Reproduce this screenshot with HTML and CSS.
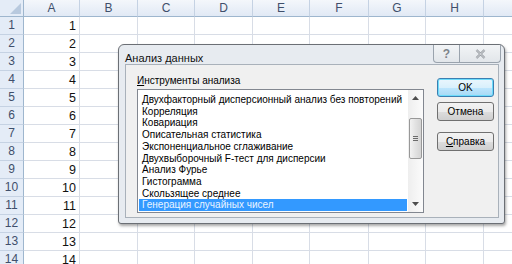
FILE: index.html
```html
<html>
<head>
    <meta charset="UTF-8">
    <title>Анализ данных</title>
    <link rel="stylesheet" href="styles.css">
</head>
<body>
    <div class="sheet">
        <div class="corner"><span class="corner-mark"></span></div>
        <div class="col-head">A</div>
        <div class="col-head">B</div>
        <div class="col-head">C</div>
        <div class="col-head">D</div>
        <div class="col-head">E</div>
        <div class="col-head">F</div>
        <div class="col-head">G</div>
        <div class="col-head">H</div>
        <div class="col-head"></div>
    </div>

    <div class="dialog">
        <div class="title-bar">
            <span class="title">Анализ данных</span>
            <div class="caption-buttons">
                <span class="cap-btn help">?</span>
                <span class="cap-btn close">
                    <svg width="11" height="10" viewBox="0 0 11 10">
                        <path d="M1.5 1 L9.5 9 M9.5 1 L1.5 9" stroke="#8a8f96" stroke-width="2.2" fill="none"/>
                        <path d="M1.5 1 L9.5 9 M9.5 1 L1.5 9" stroke="#f4f5f6" stroke-width="0.8" fill="none"/>
                    </svg>
                </span>
            </div>
        </div>
        <div class="client">
            <div class="tools">
                <div class="label"><u>И</u>нструменты анализа</div>
                <div class="listbox">
                    <ul class="items">
                        <li>Двухфакторный дисперсионный анализ без повторений</li>
                        <li>Корреляция</li>
                        <li>Ковариация</li>
                        <li>Описательная статистика</li>
                        <li>Экспоненциальное сглаживание</li>
                        <li>Двухвыборочный F-тест для дисперсии</li>
                        <li>Анализ Фурье</li>
                        <li>Гистограмма</li>
                        <li>Скользящее среднее</li>
                        <li class="selected">Генерация случайных чисел</li>
                    </ul>
                    <div class="scrollbar">
                        <span class="arrow up">
                            <svg width="7" height="4" viewBox="0 0 7 4"><path d="M0 4 L3.5 0 L7 4 Z" fill="#4d4d4d"/></svg>
                        </span>
                        <div class="track">
                            <div class="thumb"><span class="grip"></span></div>
                        </div>
                        <span class="arrow down">
                            <svg width="7" height="4" viewBox="0 0 7 4"><path d="M0 0 L3.5 4 L7 0 Z" fill="#4d4d4d"/></svg>
                        </span>
                    </div>
                </div>
            </div>
            <div class="buttons">
                <button class="btn default">OK</button>
                <button class="btn">Отмена</button>
                <button class="btn help-btn"><u>С</u>правка</button>
            </div>
        </div>
    </div>

    <script>
        const sheet = document.querySelector('.sheet');
        for (let r = 1; r <= 14; r++) {
            let row = '<div class="row-head">' + r + '</div><div class="cell num">' + r + '</div>';
            for (let c = 0; c < 8; c++) {
                row += '<div class="cell"></div>';
            }
            sheet.insertAdjacentHTML('beforeend', row);
        }
    </script>
</body>
</html>
```

FILE: styles.css
```css
body {
    margin: 0;
    width: 512px;
    height: 264px;
    overflow: hidden;
    position: relative;
    background: #ffffff;
    font-family: 'Liberation Sans', Arial, sans-serif;
}

/* spreadsheet */

.sheet {
    display: grid;
    grid-template-columns: 24px 56px 58px 57px 58px 57px 59px 57px 58px 40px;
    grid-template-rows: 17px;
    grid-auto-rows: 18px;
}

.corner {
    position: relative;
    background: #e4ecf7;
    border-right: 1px solid #9eb6ce;
    border-bottom: 1px solid #9eb6ce;
}

.corner-mark {
    position: absolute;
    right: 2px;
    bottom: 2px;
    width: 0;
    height: 0;
    border-left: 11px solid transparent;
    border-bottom: 11px solid #b8c9de;
}

.col-head {
    background: linear-gradient(#f4f7fb, #e1e9f5);
    border-right: 1px solid #c5d2e3;
    border-bottom: 1px solid #9eb6ce;
    color: #3f4f6b;
    font-size: 12px;
    line-height: 16px;
    text-align: center;
}

.row-head {
    background: #e4ecf7;
    border-right: 1px solid #9eb6ce;
    border-bottom: 1px solid #c5d2e3;
    color: #3f4f6b;
    font-size: 12px;
    line-height: 17px;
    text-align: center;
}

.cell {
    border-right: 1px solid #d8dde6;
    border-bottom: 1px solid #d8dde6;
}

.num {
    font-size: 12.5px;
    line-height: 18px;
    text-align: right;
    padding-right: 3px;
    color: #111;
}

/* dialog window */

.dialog {
    position: absolute;
    left: 118px;
    top: 44px;
    width: 387px;
    height: 180px;
    border: 1px solid #6b6f75;
    border-radius: 6px 6px 3px 3px;
    background: #e7ebf0;
    box-shadow: 1px 2px 3px rgba(0, 0, 0, 0.35);
    display: flex;
    flex-direction: column;
    padding: 0 5px 5px 6px;
    box-sizing: border-box;
    font-family: 'Liberation Sans', Tahoma, sans-serif;
    color: #000;
}

.title-bar {
    height: 19px;
    display: flex;
    align-items: flex-start;
    justify-content: space-between;
}

.title {
    font-size: 11px;
    margin-top: 7px;
    color: #111;
}

.caption-buttons {
    display: flex;
    margin-right: -2px;
    border: 1px solid #9aa3ad;
    border-top: none;
    border-radius: 0 0 4px 4px;
    background: linear-gradient(#f2f4f6, #e2e6ea);
    height: 17px;
}

.cap-btn {
    display: flex;
    align-items: center;
    justify-content: center;
    color: #7d838a;
    font-size: 12px;
    font-weight: bold;
}

.help {
    width: 25px;
    border-right: 1px solid #9aa3ad;
}

.close {
    width: 40px;
}

.client {
    flex: 1;
    background: #f0f0f0;
    border: 1px solid #a9b1ba;
    display: flex;
    padding: 10px 8px 0 11px;
    gap: 13px;
}

.tools {
    display: flex;
    flex-direction: column;
}

.label {
    font-size: 10px;
    line-height: 12px;
    margin-bottom: 2px;
}

.listbox {
    width: 285px;
    height: 122px;
    border: 1px solid #828790;
    background: #fff;
    display: flex;
}

.items {
    list-style: none;
    margin: 0;
    padding: 4px 1px 0 1px;
    flex: 1;
}

.items li {
    font-size: 10px;
    line-height: 11.7px;
    padding-left: 3px;
    white-space: nowrap;
}

.items li.selected {
    background: #3399ff;
    color: #eaf4ff;
}

.scrollbar {
    width: 15px;
    display: flex;
    flex-direction: column;
    background: linear-gradient(90deg, #eeeeee, #fbfbfb);
}

.arrow {
    height: 16px;
    display: flex;
    align-items: center;
    justify-content: center;
}

.track {
    flex: 1;
    padding-top: 12px;
    padding-bottom: 37px;
    display: flex;
}

.thumb {
    flex: 1;
    margin: 0 1px;
    border: 1px solid #989898;
    border-radius: 2px;
    background: linear-gradient(90deg, #f2f2f2, #e2e2e2 50%, #d4d4d4);
    display: flex;
    align-items: center;
    justify-content: center;
}

.grip {
    width: 5px;
    height: 5px;
    background: repeating-linear-gradient(#6b6b6b 0 1px, transparent 1px 2px);
}

.buttons {
    display: flex;
    flex-direction: column;
    padding-top: 3px;
}

.btn {
    width: 57px;
    height: 19px;
    margin-bottom: 5px;
    padding: 0;
    border: 1px solid #707070;
    border-radius: 3px;
    background: linear-gradient(#f2f2f2 0%, #ebebeb 50%, #dddddd 51%, #cfcfcf 100%);
    font-family: 'Liberation Sans', Tahoma, sans-serif;
    font-size: 10px;
    color: #000;
}

.btn.default {
    border-color: #3c7fb1;
    box-shadow: inset 0 0 0 1px #6ddcfb;
    background: linear-gradient(#eaf6fd 0%, #d9f0fc 50%, #bee6fd 51%, #a7d9f5 100%);
}

.help-btn {
    margin-top: 6px;
}
```
